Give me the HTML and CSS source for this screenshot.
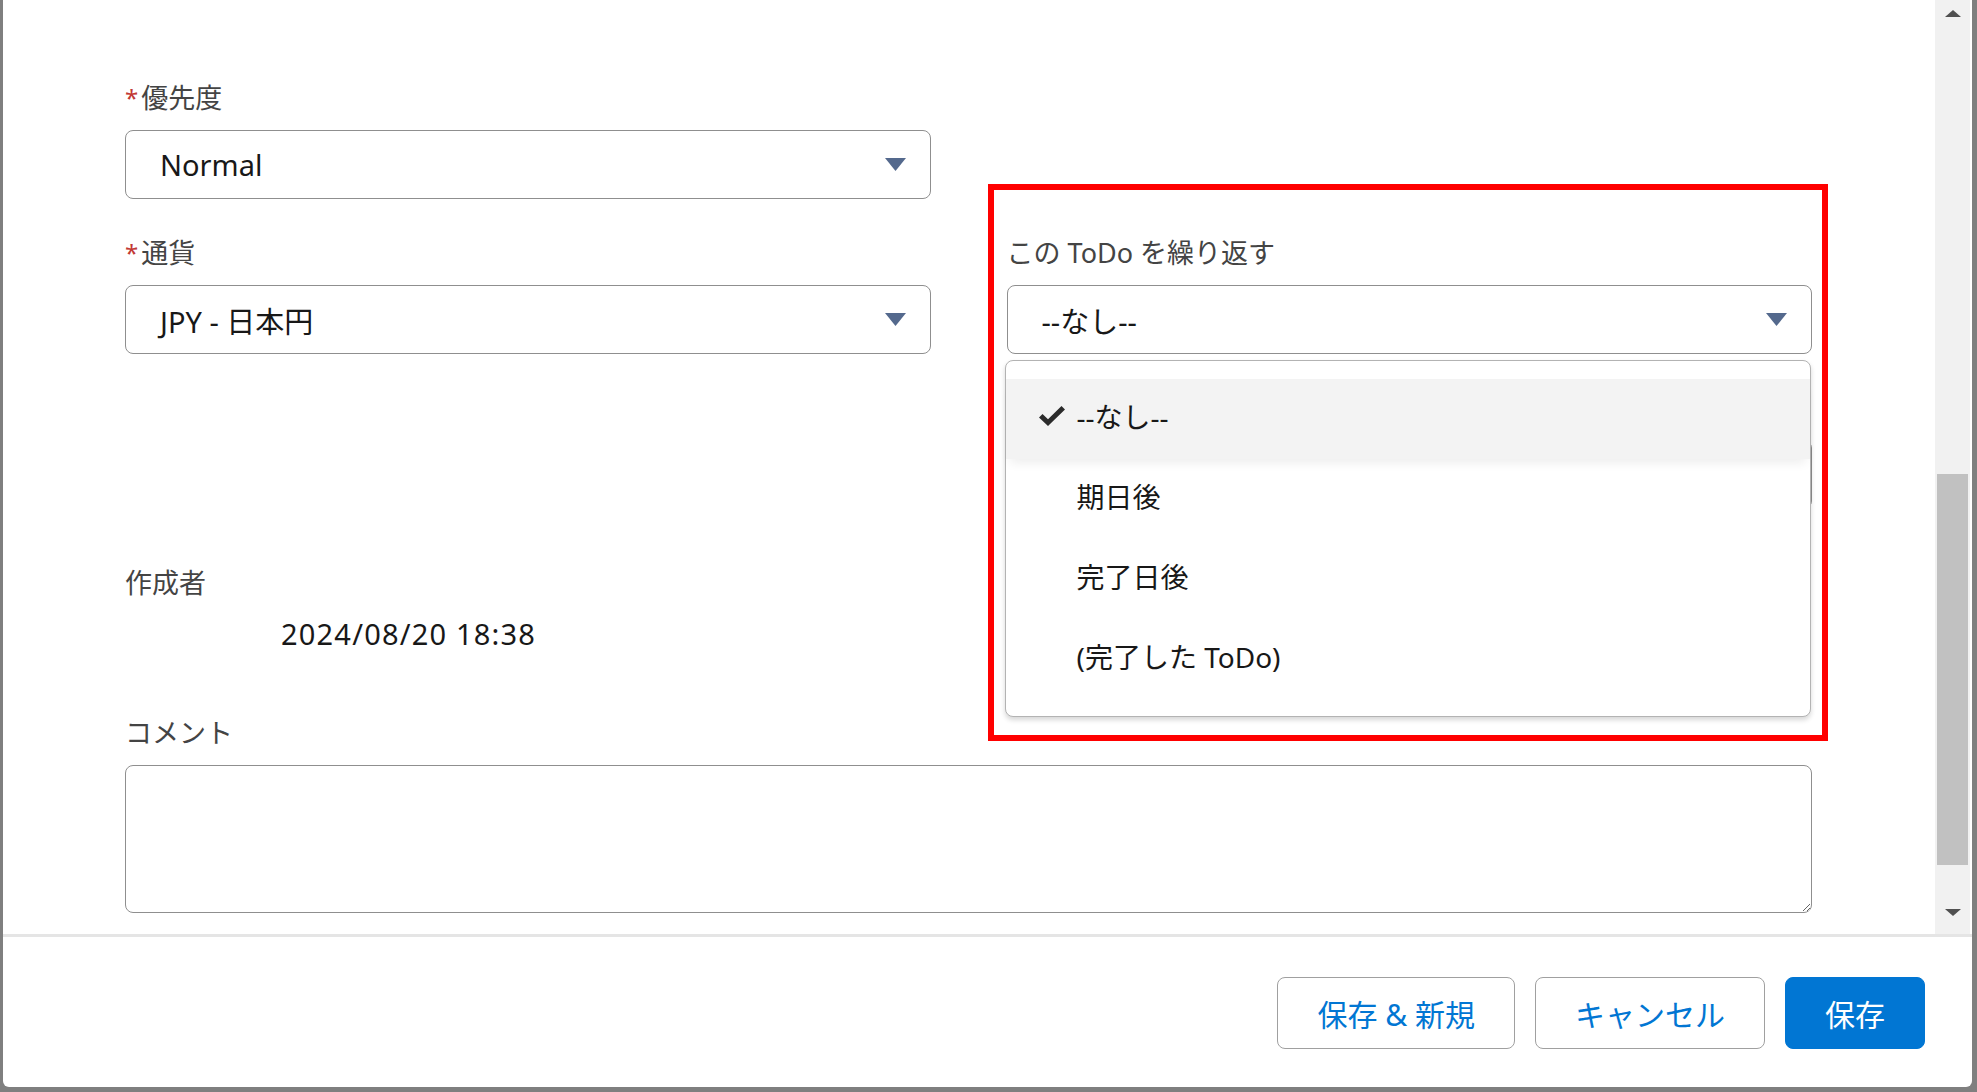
FILE: index.html
```html
<!DOCTYPE html>
<html lang="ja">
  <head>
    <meta charset="UTF-8" />
    <title>ToDo の編集</title>
    <link rel="stylesheet" href="styles.css">
  </head>
  <body>
    <div class="modal">
      <div class="modal-body">
        <div class="modal-content">
          <div class="form-grid">
            <div class="field">
              <label class="field-label"><abbr class="required">*</abbr>優先度</label>
              <div class="select">
                <span>Normal</span>
                <svg class="select-arrow" width="21" height="13" viewBox="0 0 21 13"><path d="M0 0h21L10.5 13z" /></svg>
              </div>
            </div>
            <div></div>

            <div class="field">
              <label class="field-label"><abbr class="required">*</abbr>通貨</label>
              <div class="select">
                <span>JPY - 日本円</span>
                <svg class="select-arrow" width="21" height="13" viewBox="0 0 21 13"><path d="M0 0h21L10.5 13z" /></svg>
              </div>
            </div>
            <div class="field">
              <label class="field-label">この ToDo を繰り返す</label>
              <div class="combobox">
                <div class="select">
                  <span>--なし--</span>
                  <svg class="select-arrow" width="21" height="13" viewBox="0 0 21 13"><path d="M0 0h21L10.5 13z" /></svg>
                </div>
                <ul class="dropdown">
                  <li class="option is-selected">
                    <svg class="option-check" width="26" height="20" viewBox="0 0 26 20"><path d="M0 11.5L3.5 8 9 13.2 22.5 0 26 3.5 9 20z" /></svg>
                    --なし--
                  </li>
                  <li class="option"><span class="option-check"></span>期日後</li>
                  <li class="option"><span class="option-check"></span>完了日後</li>
                  <li class="option"><span class="option-check"></span>(完了した ToDo)</li>
                </ul>
              </div>
            </div>

            <div></div>
            <div class="field">
              <label class="field-label">&nbsp;</label>
              <div class="select"></div>
            </div>

            <div class="field readonly">
              <span class="field-label">作成者</span>
              <div class="readonly-value">2024/08/20 18:38</div>
            </div>
            <div></div>

            <div class="field field-wide">
              <label class="field-label">コメント</label>
              <textarea class="textarea"></textarea>
            </div>
          </div>

          <!-- marker frame around the repeat setting -->
          <div class="highlight-frame"></div>
        </div>

        <div class="scrollbar">
          <div class="scroll-btn"><span class="arrow-up"></span></div>
          <div class="scroll-thumb"></div>
          <div class="scroll-space"></div>
          <div class="scroll-btn"><span class="arrow-down"></span></div>
        </div>
      </div>

      <div class="modal-footer">
        <button class="btn">保存 &amp; 新規</button>
        <button class="btn">キャンセル</button>
        <button class="btn btn-brand">保存</button>
      </div>
    </div>
  </body>
</html>
```

FILE: styles.css
```css
body {
  margin: 0;
  height: 1092px;
  overflow: hidden;
  background: #7f7f7f;
  font-family: "Noto Sans", "Noto Sans CJK JP", sans-serif;
}
.modal {
  margin-left: 3px;
  width: 1969px;
  height: 1087px;
  background: #fff;
  border-radius: 0 0 6px 6px;
  display: flex;
  flex-direction: column;
  overflow: hidden;
}
.modal-body {
  display: flex;
  height: 934px;
}
.modal-content {
  flex: 1;
  position: relative;
  padding: 80px 123px 0 122px;
}
.form-grid {
  display: grid;
  grid-template-columns: 1fr 1fr;
  column-gap: 76px;
  row-gap: 36px;
}
.field-label {
  display: block;
  height: 36px;
  font-size: 27px;
  line-height: 36px;
  color: #444;
  margin-bottom: 14px;
}
.required {
  color: #c23934;
  text-decoration: none;
  font-size: 24px;
  vertical-align: top;
  margin-right: 3px;
}
.select {
  height: 69px;
  box-sizing: border-box;
  border: 1px solid #8f8f8f;
  border-radius: 8px;
  display: flex;
  align-items: center;
  justify-content: space-between;
  padding: 0 24px 0 34px;
  font-size: 29px;
  color: #181818;
  background: #fff;
}
.select-arrow {
  fill: #54698d;
}
.combobox {
  position: relative;
}
.dropdown {
  position: absolute;
  top: calc(100% + 6px);
  left: -2px;
  right: 1px;
  margin: 0;
  padding: 18px 0 17px;
  list-style: none;
  background: #fff;
  border: 1px solid #b3b3b3;
  border-radius: 8px;
  box-shadow: 0 3px 5px rgba(0, 0, 0, 0.16);
  z-index: 2;
}
.option {
  height: 80px;
  box-sizing: border-box;
  display: flex;
  align-items: center;
  padding: 0 0 6px 33px;
  font-size: 28px;
  color: #181818;
}
.option-check {
  width: 26px;
  margin-right: 12px;
  fill: #2b2b2b;
}
.option.is-selected {
  background: #f3f3f3;
  box-shadow: 0 8px 10px -4px rgba(0, 0, 0, 0.07);
}
.readonly {
  padding: 20px 0 27px;
}
.readonly .field-label {
  margin-bottom: 15px;
}
.readonly-value {
  padding-left: 156px;
  font-size: 29px;
  line-height: 36px;
  letter-spacing: 1.2px;
  color: #181818;
}
.field-wide {
  grid-column: 1 / span 2;
}
.textarea {
  display: block;
  width: 100%;
  height: 148px;
  box-sizing: border-box;
  border: 1px solid #8f8f8f;
  border-radius: 8px;
  resize: vertical;
  font: inherit;
  margin: 0;
}
.highlight-frame {
  position: absolute;
  left: 985px;
  top: 184px;
  width: 840px;
  height: 557px;
  box-sizing: border-box;
  border: 6px solid #f00;
  z-index: 3;
  pointer-events: none;
}
.scrollbar {
  width: 35px;
  margin-right: 2px;
  padding-bottom: 9px;
  box-sizing: border-box;
  background: #f1f1f1;
  display: flex;
  flex-direction: column;
  align-items: center;
}
.scroll-btn {
  height: 26px;
  width: 100%;
  display: flex;
  align-items: center;
  justify-content: center;
}
.arrow-up {
  border-left: 8px solid transparent;
  border-right: 8px solid transparent;
  border-bottom: 7px solid #505050;
}
.arrow-down {
  border-left: 8px solid transparent;
  border-right: 8px solid transparent;
  border-top: 7px solid #505050;
}
.scroll-thumb {
  width: 31px;
  height: 391px;
  margin-top: 448px;
  background: #c1c1c1;
}
.scroll-space {
  flex: 1;
}
.modal-footer {
  flex: 1;
  border-top: 3px solid #e5e5e5;
  display: flex;
  justify-content: flex-end;
  align-items: flex-start;
  gap: 20px;
  padding: 40px 47px 0 0;
}
.btn {
  height: 72px;
  box-sizing: border-box;
  padding: 0 39px;
  border: 1px solid #a0a0a0;
  border-radius: 8px;
  background: #fff;
  color: #0176d3;
  font-family: inherit;
  font-size: 30px;
  cursor: pointer;
}
.btn-brand {
  background: #0176d3;
  border-color: #0176d3;
  color: #fff;
}
```
